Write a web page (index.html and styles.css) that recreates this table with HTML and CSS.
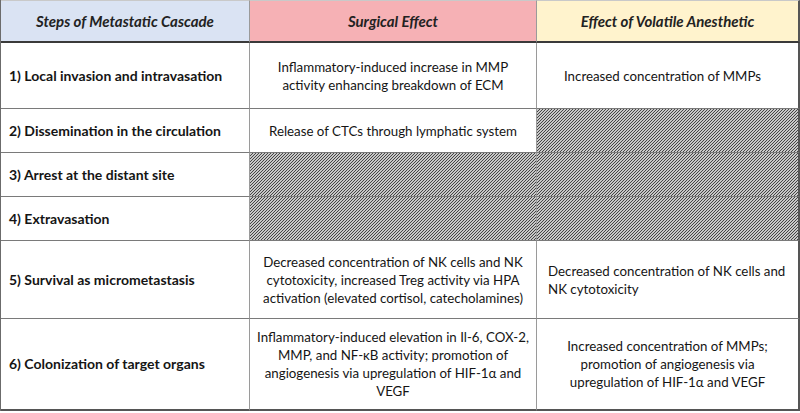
FILE: index.html
```html
<!DOCTYPE html>
<html>
<head>
<meta charset="utf-8">
<link rel="stylesheet" href="styles.css">
</head>
<body>
<div class="tbl">
  <div class="cell head h1">Steps of Metastatic Cascade</div>
  <div class="cell head h2">Surgical Effect</div>
  <div class="cell head h3 last">Effect of Volatile Anesthetic</div>

  <div class="cell step">1) Local invasion and intravasation</div>
  <div class="cell txt">Inflammatory-induced increase in MMP<br>activity enhancing breakdown of ECM</div>
  <div class="cell txt left last pad-l1">Increased concentration of MMPs</div>

  <div class="cell step">2) Dissemination in the circulation</div>
  <div class="cell txt">Release of CTCs through lymphatic system</div>
  <div class="cell hatch last"></div>

  <div class="cell step">3) Arrest at the distant site</div>
  <div class="cell hatch"></div>
  <div class="cell hatch last"></div>

  <div class="cell step">4) Extravasation</div>
  <div class="cell hatch"></div>
  <div class="cell hatch last"></div>

  <div class="cell step">5) Survival as micrometastasis</div>
  <div class="cell txt">Decreased concentration of NK cells and NK<br>cytotoxicity, increased Treg activity via HPA<br>activation (elevated cortisol, catecholamines)</div>
  <div class="cell txt left last pad-l2">Decreased concentration of NK cells and<br>NK cytotoxicity</div>

  <div class="cell step bottom">6) Colonization of target organs</div>
  <div class="cell txt bottom">Inflammatory-induced elevation in Il-6, COX-2,<br>MMP, and NF-κB activity; promotion of<br>angiogenesis via upregulation of HIF-1α and<br>VEGF</div>
  <div class="cell txt bottom last">Increased concentration of MMPs;<br>promotion of angiogenesis via<br>upregulation of HIF-1α and VEGF</div>
</div>
</body>
</html>
```

FILE: styles.css
```css
html, body {
  margin: 0;
  padding: 0;
  background: #ffffff;
}
body {
  font-family: Lato, "Open Sans", sans-serif;
  color: #151515;
}
.tbl {
  display: grid;
  width: 799px;
  grid-template-columns: 249px 287px 263px;
  grid-template-rows: 43px 66px 44px 44px 44px 78px 92px;
  border-left: 1px solid #6b6b6b;
  box-sizing: border-box;
}
.cell {
  box-sizing: border-box;
  border-right: 1px solid #9a9a9a;
  border-bottom: 1px solid #7a7a7a;
  display: flex;
  align-items: center;
  font-size: 13.3px;
  line-height: 18px;
  white-space: nowrap;
}
.cell.last {
  border-right: 2px solid #555;
}
.cell.bottom {
  border-bottom: 2px solid #555;
}
.head {
  justify-content: center;
  font-weight: bold;
  font-style: italic;
  font-size: 15px;
  border-bottom: 2px solid #3a3a3a;
  border-top: 1px solid #c9c9c9;
  color: #222;
}
.h1 { background: #dae3f3; }
.h2 { background: #f6b1b5; }
.h3 { background: #fff3cd; }
.step {
  font-weight: bold;
  padding-left: 8px;
  font-size: 14px;
}
.txt {
  justify-content: center;
  text-align: center;
  padding: 0 4px;
}
.txt.left {
  justify-content: flex-start;
  text-align: left;
}
.pad-l1 { padding-left: 27px; }
.pad-l2 { padding-left: 11px; }
.hatch {
  background-color: #b4b4b4;
  background-image: url("data:image/svg+xml,%3Csvg xmlns='http://www.w3.org/2000/svg' width='3' height='3' shape-rendering='crispEdges'%3E%3Crect width='3' height='3' fill='%23c8c8c8'/%3E%3Crect x='2' y='0' width='1' height='1' fill='%23454545'/%3E%3Crect x='1' y='1' width='1' height='1' fill='%23454545'/%3E%3Crect x='0' y='2' width='1' height='1' fill='%23454545'/%3E%3C/svg%3E");
  background-size: 3px 3px;
}
```
